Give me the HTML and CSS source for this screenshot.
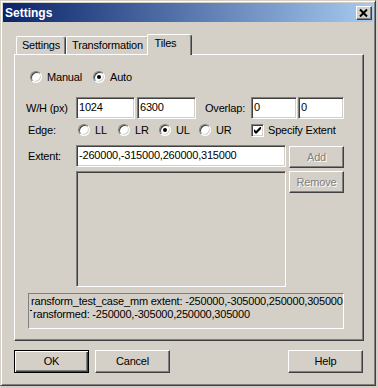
FILE: index.html
```html
<!DOCTYPE html>
<html>

<head>
    <meta charset="UTF-8" />
    <title>Settings</title>
    <link rel="stylesheet" href="styles.css">
</head>

<body>
    <div class="window">
        <div class="titlebar">
            <span class="title">Settings</span>
            <span class="close">
                <svg width="16" height="14" viewBox="0 0 16 14">
                    <path d="M4 3.5 L11 10.5 M11 3.5 L4 10.5" stroke="#000" stroke-width="2" fill="none" />
                </svg>
            </span>
        </div>
        <div class="client">
            <div class="tabs">
                <div class="tab tab-settings">Settings</div>
                <div class="tab tab-transform">Transformation</div>
                <div class="tab tab-tiles active">Tiles</div>
            </div>
            <div class="panel">
                <div class="row mode-row">
                    <label class="opt opt-manual"><span class="radio"></span>Manual</label>
                    <label class="opt"><span class="radio checked"></span>Auto</label>
                </div>
                <div class="row size-row">
                    <span class="label label-wh">W/H (px)</span>
                    <div class="field size">1024</div>
                    <div class="field size">6300</div>
                    <span class="overlap">Overlap:</span>
                    <div class="field small">0</div>
                    <div class="field small">0</div>
                </div>
                <div class="row edge-row">
                    <span class="label">Edge:</span>
                    <label class="opt w40"><span class="radio"></span>LL</label>
                    <label class="opt w41"><span class="radio"></span>LR</label>
                    <label class="opt w40"><span class="radio checked"></span>UL</label>
                    <label class="opt w52"><span class="radio"></span>UR</label>
                    <label class="check">
                        <span class="box">
                            <svg width="7" height="7" viewBox="0 0 7 7">
                                <polygon points="0,2 2,4 7,-1 7,2 2,7 0,5" fill="#000" />
                            </svg>
                        </span>Specify Extent
                    </label>
                </div>
                <div class="extent">
                    <span class="label extent-label">Extent:</span>
                    <div class="field extent-field">-260000,-315000,260000,315000</div>
                    <div class="btn disabled btn-add">Add</div>
                    <div class="list"></div>
                    <div class="btn disabled btn-remove">Remove</div>
                </div>
                <div class="status">
                    <div class="line">ransform_test_case_mm extent: -250000,-305000,250000,305000</div>
                    <div class="line cut">ransformed: -250000,-305000,250000,305000</div>
                </div>
            </div>
            <div class="buttons">
                <div class="btn default">OK</div>
                <div class="btn">Cancel</div>
                <div class="btn btn-help">Help</div>
            </div>
        </div>
    </div>
</body>

</html>
```

FILE: styles.css
```css
* {
    margin: 0;
    padding: 0;
    box-sizing: border-box;
}

body {
    background: #d4d0c8;
    font-family: "Liberation Sans", Arial, sans-serif;
    font-size: 11px;
    letter-spacing: -0.2px;
    color: #000;
}

.window {
    width: 376px;
    height: 386px;
    padding: 2px;
    background: #d4d0c8;
    border: 1px solid;
    border-color: #d4d0c8 #404040 #404040 #d4d0c8;
    box-shadow: inset 1px 1px #fff, inset -1px -1px #808080;
}

.titlebar {
    height: 19px;
    display: flex;
    align-items: center;
    justify-content: space-between;
    background: linear-gradient(to right, #0a246a, #a6caf0);
    padding: 1px 1px 0 2px;
}

.title {
    color: #fff;
    font-weight: bold;
    font-size: 12px;
    letter-spacing: 0;
}

.close {
    width: 16px;
    height: 14px;
    display: block;
    margin-top: -1px;
    background: #d4d0c8;
    border: 1px solid;
    border-color: #fff #404040 #404040 #fff;
    box-shadow: inset -1px -1px #808080;
}

.close svg {
    display: block;
    margin: -1px 0 0 -1px;
}

.client {
    padding: 0 0 0 11px;
}

/* tab strip */
.tabs {
    margin-top: 12px;
    height: 20px;
    display: flex;
    align-items: flex-end;
    padding-left: 2px;
}

.tab {
    height: 18px;
    padding-top: 2px;
    line-height: 13px;
    text-align: center;
    border: 1px solid;
    border-bottom: none;
    border-color: #fff #404040 #fff #fff;
    border-radius: 2px 3px 0 0;
    box-shadow: inset -1px 0 #808080;
}

.tab-settings {
    width: 50px;
}

.tab-transform {
    width: 83px;
}

.tab-tiles {
    width: 45px;
    padding-right: 8px;
}

.tab.active {
    height: 21px;
    margin: 0 -2px -1px -2px;
    background: #d4d0c8;
    position: relative;
    z-index: 1;
}

/* panel */
.panel {
    width: 350px;
    height: 287px;
    padding: 0 13px;
    border: 1px solid;
    border-color: #fff #404040 #404040 #fff;
    box-shadow: inset -1px -1px #808080;
}

.row {
    display: flex;
    align-items: center;
}

.mode-row {
    height: 18px;
    margin-top: 13px;
}

.size-row {
    height: 22px;
    margin-top: 11px;
    width: 316px;
}

.edge-row {
    height: 18px;
    margin-top: 2px;
}

.label {
    width: 48px;
    flex: none;
}

.label-wh {
    margin-left: -2px;
    width: 50px;
}

.overlap {
    margin-left: auto;
    margin-right: 4px;
}

.opt {
    display: flex;
    align-items: center;
    flex: none;
}

.opt-manual {
    width: 63px;
}

.w40 {
    width: 40px;
}

.w41 {
    width: 41px;
}

.w52 {
    width: 52px;
}

.radio {
    width: 12px;
    height: 12px;
    margin: 0 5px 0 2px;
    border-radius: 50%;
    background: #fff;
    border: 1px solid;
    border-color: #808080 #fff #fff #808080;
    box-shadow: inset 1px 1px #404040, inset -1px -1px #d4d0c8;
    display: flex;
    align-items: center;
    justify-content: center;
}

.radio.checked::after {
    content: "";
    width: 4px;
    height: 4px;
    border-radius: 50%;
    background: #000;
}

.check {
    display: flex;
    align-items: center;
    margin-left: 2px;
}

.box {
    width: 13px;
    height: 13px;
    margin-right: 4px;
    background: #fff;
    border: 1px solid;
    border-color: #808080 #fff #fff #808080;
    box-shadow: inset 1px 1px #404040, inset -1px -1px #d4d0c8;
    padding: 2px 0 0 2px;
}

.box svg {
    display: block;
}

.field {
    height: 22px;
    line-height: 18px;
    background: #fff;
    border: 1px solid;
    border-color: #808080 #fff #fff #808080;
    box-shadow: inset 1px 1px #404040, inset -1px -1px #d4d0c8;
    padding-left: 2px;
    flex: none;
    white-space: nowrap;
    overflow: hidden;
}

.field.size {
    width: 59px;
    margin-right: 2px;
}

.field.small {
    width: 46px;
    margin-left: 2px;
}

.field.small + .field.small {
    margin-left: 1px;
}

/* extent block */
.extent {
    margin-top: 6px;
    display: grid;
    grid-template-columns: 48px 210px 3px 55px;
    grid-template-rows: 22px 116px;
    row-gap: 4px;
    align-items: center;
}

.extent-field {
    grid-column: 2;
}

.btn-add {
    grid-column: 4;
    grid-row: 1;
    margin-top: 2px;
}

.list {
    grid-column: 2;
    grid-row: 2;
    height: 116px;
    border: 1px solid;
    border-color: #808080 #fff #fff #808080;
    box-shadow: inset 1px 1px #404040, inset -1px -1px #d4d0c8;
}

.btn-remove {
    grid-column: 4;
    grid-row: 2;
    align-self: start;
}

.status {
    margin-top: 6px;
    width: 316px;
    height: 36px;
    padding: 1px 0 0 2px;
    line-height: 13px;
    border: 1px solid;
    border-color: #808080 #fff #fff #808080;
    white-space: nowrap;
    overflow: hidden;
}

.line.cut::before {
    content: "";
    display: inline-block;
    width: 2px;
    height: 1px;
    background: #000;
    vertical-align: 7px;
    margin: 0 1px 0 -1px;
}

/* buttons */
.btn {
    height: 22px;
    line-height: 20px;
    text-align: center;
    background: #d4d0c8;
    border: 1px solid;
    border-color: #fff #404040 #404040 #fff;
    box-shadow: inset -1px -1px #808080;
}

.btn.disabled {
    color: #808080;
    text-shadow: 1px 1px #fff;
}

.buttons {
    margin-top: 9px;
    width: 349px;
    display: flex;
    gap: 6px;
}

.buttons .btn {
    width: 75px;
    height: 23px;
}

.btn.default {
    border-color: #000;
    box-shadow: inset 1px 1px #fff, inset -1px -1px #404040, inset -2px -2px #808080;
}

.btn-help {
    margin-left: auto;
}
```
